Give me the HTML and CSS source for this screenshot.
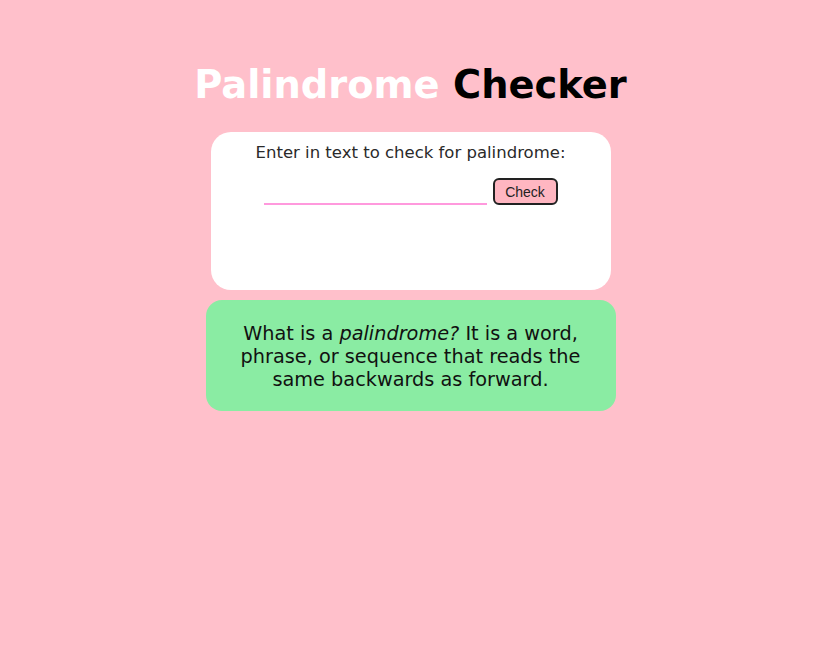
FILE: index.html
```html
<!DOCTYPE html>
<html>
<head>
<meta charset="utf-8">
<link rel="stylesheet" href="styles.css">
</head>
<body>
<main class="page">
  <h1 class="title"><span class="title-light">Palindrome</span> Checker</h1>
  <section class="card">
    <label class="prompt" for="text-input">Enter in text to check for palindrome:</label>
    <div class="input-row">
      <input id="text-input" class="text-input" type="text">
      <button class="check-btn" type="button">Check</button>
    </div>
  </section>
  <section class="info">
    <p>What is a <em>palindrome?</em> It is a word, phrase, or sequence that reads the same backwards as forward.</p>
  </section>
</main>
</body>
</html>
```
FILE: styles.css
```css
html, body {
  margin: 0;
  padding: 0;
  background: #ffc0cb;
  height: 100%;
}
body {
  font-family: "DejaVu Sans", Verdana, sans-serif;
  color: #000;
}
.page {
  display: flex;
  flex-direction: column;
  align-items: center;
  padding-top: 62px;
  padding-right: 6px;
}
.title {
  margin: 0 0 24px;
  font-size: 38.4px;
  font-weight: bold;
  line-height: 46px;
  color: #000;
}
.title-light {
  color: #fff;
}
.card {
  box-sizing: border-box;
  width: 400px;
  height: 158px;
  background: #fff;
  border-radius: 20px;
  display: flex;
  flex-direction: column;
  align-items: center;
  padding-top: 11px;
  margin-bottom: 10px;
}
.prompt {
  font-size: 16.5px;
  line-height: 20px;
  color: #2a2a2a;
}
.input-row {
  display: flex;
  align-items: flex-end;
  gap: 6px;
  margin-top: 15px;
}
.text-input {
  width: 223px;
  height: 24px;
  box-sizing: border-box;
  border: none;
  border-bottom: 2px solid #ff99dd;
  background: transparent;
  outline: none;
}
.check-btn {
  box-sizing: border-box;
  width: 65px;
  height: 27px;
  background: #ffb6c1;
  border: 2px solid #222;
  border-radius: 6px;
  font-family: "Liberation Sans", Arial, sans-serif;
  font-size: 14px;
  color: #222;
  padding: 0;
}
.info {
  box-sizing: border-box;
  width: 410px;
  height: 111px;
  background: #8aeca3;
  border-radius: 16px;
  display: flex;
  justify-content: center;
  padding-top: 22px;
}
.info p {
  margin: 0;
  width: 360px;
  text-align: center;
  font-size: 19.3px;
  line-height: 23px;
  color: #111;
}
```
